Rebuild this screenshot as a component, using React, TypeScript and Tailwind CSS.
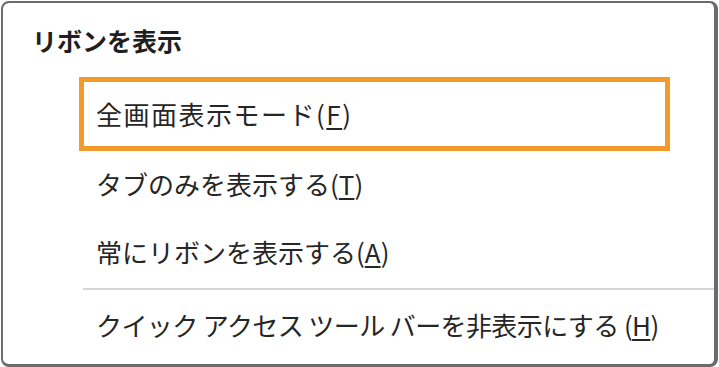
const FONT = "font-['Noto_Sans_CJK_JP','Noto_Sans',sans-serif]";

function Item({
  label,
  keyChar,
  gap = "",
  boxed = false,
  h,
  track = "tracking-[-0.5px]",
}: {
  label: string;
  keyChar: string;
  gap?: string;
  boxed?: boolean;
  h: string;
  track?: string;
}) {
  return (
    <div
      className={`${h} w-[591px] flex items-center ${
        boxed ? "border-[5px] border-[#f39a2b] pl-[12px]" : "pl-[17px]"
      } text-[26px] leading-none text-[#262626] whitespace-nowrap ${track}`}
    >
      <span>
        {label}
        {gap}(<span className="underline underline-offset-[3px] decoration-[1.5px]">{keyChar}</span>)
      </span>
    </div>
  );
}

export default function App() {
  return (
    <div className={`w-[719px] h-[367px] bg-white pt-[1px] pl-[1px] ${FONT}`}>
      <div className="w-[717px] h-[366px] bg-white rounded-[8px] border-l-2 border-t-2 border-r-4 border-b-[3px] border-[#6b6b6b] overflow-hidden">
        <div className="h-[74px] flex items-center pl-[29px] text-[25px] font-bold text-[#1f1f1f] leading-none">
          リボンを表示
        </div>
        <div className="pl-[76px] flex flex-col">
          <Item boxed h="h-[74px]" label="全画面表示モード" keyChar="F" track="tracking-[1.5px]" />
          <Item h="h-[66px]" label="タブのみを表示する" keyChar="T" track="tracking-[0px]" />
          <Item h="h-[70px]" label="常にリボンを表示する" keyChar="A" track="tracking-[0px]" />
          <div className="mt-[1px] ml-[4px] h-[2px] bg-[#d6d6d6]" />
          <Item h="h-[70px]" label="クイック アクセス ツール バーを非表示にする" gap=" " keyChar="H" track="tracking-[-0.6px]" />
        </div>
      </div>
    </div>
  );
}
